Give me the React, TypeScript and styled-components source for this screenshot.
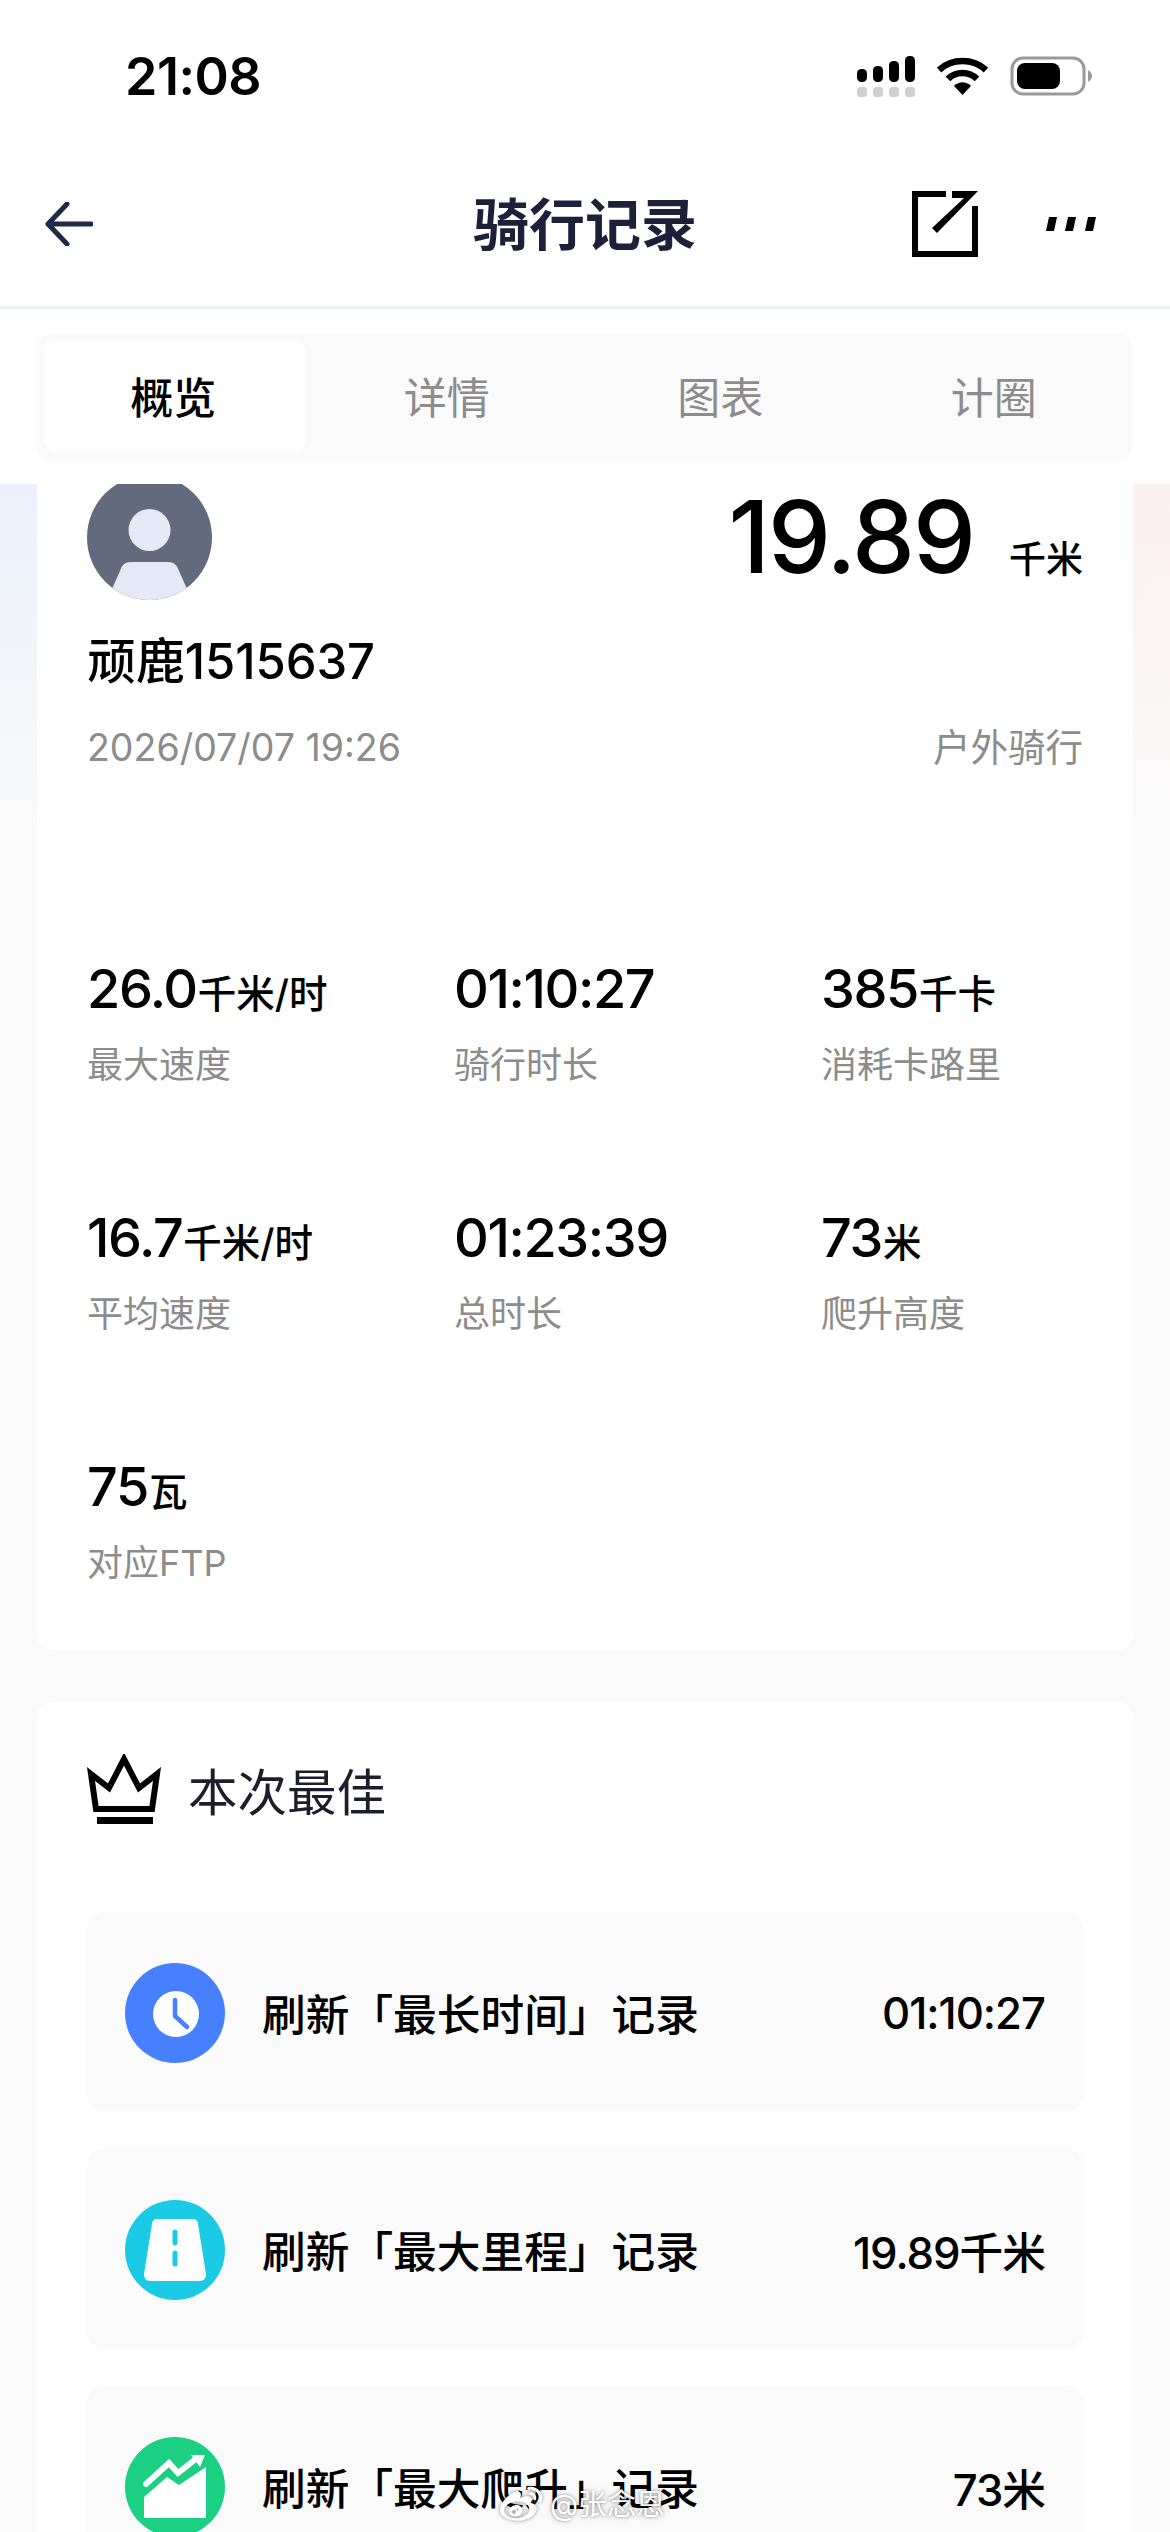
import React from 'react';
import styled, { createGlobalStyle } from 'styled-components';
import { FaWeibo } from 'react-icons/fa';

const GlobalStyle = createGlobalStyle`
  html, body {
    margin: 0;
    padding: 0;
    background: #fafafa;
  }
  * {
    box-sizing: border-box;
  }
`;

const FONT = `Inter, 'Noto Sans CJK SC', sans-serif`;

const Page = styled.div`
  width: 1170px;
  height: 2532px;
  position: relative;
  overflow: hidden;
  display: flex;
  flex-direction: column;
  font-family: ${FONT};
  color: #000;
`;

const Header = styled.header`
  height: 484px;
  flex-shrink: 0;
  background: #fff;
  position: relative;
  z-index: 2;
`;

const StatusBar = styled.div`
  height: 152px;
  padding: 0 78px 0 125px;
  display: flex;
  align-items: flex-start;
  justify-content: space-between;
`;

const Clock = styled.div`
  margin-top: 48px;
  font-size: 52px;
  line-height: 58px;
  font-weight: 600;
  letter-spacing: -0.5px;
`;

const StatusIcons = styled.div`
  margin-top: 56px;
  display: flex;
  align-items: flex-start;
  gap: 22px;
`;

const NavBar = styled.div`
  height: 157px;
  padding: 0 74px 10px 45px;
  border-bottom: 3px solid #eef0f8;
  display: flex;
  align-items: center;
  justify-content: space-between;
  position: relative;
`;

const NavTitle = styled.h1`
  position: absolute;
  left: 0;
  right: 0;
  top: 40px;
  margin: 0;
  text-align: center;
  font-size: 56px;
  line-height: 66px;
  font-weight: 700;
  color: #1c2038;
`;

const NavActions = styled.div`
  display: flex;
  align-items: center;
  gap: 68px;
`;

const TabBar = styled.div`
  margin: 25px 37px 0;
  height: 125px;
  padding: 6px 7px;
  border-radius: 14px;
  background: #fafafa;
  display: grid;
  grid-template-columns: repeat(4, 1fr);
  column-gap: 12px;
`;

const Tab = styled.div<{ $active?: boolean }>`
  padding: 0 3px 3px 0;
  border-radius: 14px;
  background: ${({ $active }) => ($active ? '#fff' : 'transparent')};
  color: ${({ $active }) => ($active ? '#000' : '#8c8c8c')};
  font-size: 43px;
  font-weight: ${({ $active }) => ($active ? 500 : 400)};
  display: flex;
  align-items: center;
  justify-content: center;
`;

const Scroller = styled.main`
  flex: 1;
  min-height: 0;
  overflow: hidden;
  padding: 0 37px;
  background:
    linear-gradient(to bottom, rgba(250, 250, 250, 0), #fafafa 340px),
    linear-gradient(to right, #ebf0fb, #fdf0f0);
`;

const ScrollContent = styled.div`
  margin-top: -59px;
  display: flex;
  flex-direction: column;
  gap: 52px;
`;

const Card = styled.section`
  background: #fff;
  border-radius: 16px;
  padding: 50px 50px 67px;
`;

const SummaryTop = styled.div`
  display: flex;
  align-items: flex-start;
  justify-content: space-between;
`;

const Distance = styled.div`
  margin-top: 12px;
  display: flex;
  align-items: baseline;
  gap: 35px;
`;

const DistanceValue = styled.span`
  font-size: 100px;
  line-height: 100px;
  font-weight: 500;
  letter-spacing: -2px;
`;

const DistanceUnit = styled.span`
  font-size: 37px;
  font-weight: 500;
`;

const UserName = styled.div`
  margin-top: 32px;
  font-size: 49px;
  line-height: 60px;
  font-weight: 500;
  letter-spacing: -0.1px;
`;

const MetaRow = styled.div`
  margin-top: 36px;
  display: flex;
  justify-content: space-between;
  font-size: 37.5px;
  line-height: 40px;
  color: #8c8c8c;
`;

const StatGrid = styled.div`
  margin-top: 190px;
  display: grid;
  grid-template-columns: repeat(3, 367px);
  row-gap: 122px;
`;

const Stat = styled.div`
  display: flex;
  flex-direction: column;
  gap: 27px;
`;

const StatValue = styled.div`
  padding-top: 1px;
  height: 60px;
  font-size: 54px;
  line-height: 60px;
  font-weight: 500;
  letter-spacing: -1.4px;
  white-space: nowrap;
`;

const StatUnit = styled.span`
  margin-left: 1px;
  font-size: 38.5px;
  line-height: 1;
  letter-spacing: 0;
`;

const StatLabel = styled.div`
  height: 40px;
  font-size: 36px;
  line-height: 40px;
  color: #8c8c8c;
`;

const BestHeader = styled.div`
  height: 74px;
  display: flex;
  align-items: center;
  gap: 27px;
  font-size: 49.5px;
  color: #1c1e2c;
`;

const RecordList = styled.div`
  margin-top: 86px;
  display: flex;
  flex-direction: column;
  gap: 38px;
`;

const RecordRow = styled.div`
  height: 199px;
  padding: 3px 38px 0;
  border-radius: 16px;
  background: #fafafa;
  display: flex;
  align-items: center;
  gap: 37px;
  font-size: 43.7px;
  font-weight: 500;
`;

const RecordIcon = styled.div<{ $color: string }>`
  width: 100px;
  height: 100px;
  flex-shrink: 0;
  border-radius: 50%;
  background: ${({ $color }) => $color};
  display: flex;
`;

const RecordTitle = styled.div`
  flex: 1;
  padding-bottom: 3px;
`;

const RecordValue = styled.div`
  font-size: 43.7px;
  letter-spacing: -1px;
  white-space: nowrap;
`;

const Watermark = styled.div`
  position: absolute;
  left: 500px;
  top: 2484px;
  z-index: 3;
  display: flex;
  align-items: center;
  gap: 8px;
  color: #fff;
  font-size: 29px;
  line-height: 36px;
  text-shadow: 0 0 3px rgba(0, 0, 0, 0.4), 0 0 6px rgba(0, 0, 0, 0.25);
  svg {
    filter: drop-shadow(0 0 2px rgba(0, 0, 0, 0.45));
  }
`;

const SignalIcon = () => (
  <svg width="58" height="42" viewBox="0 0 58 42">
    <rect x="0" y="13" width="10" height="13" rx="4.5" fill="#000" />
    <rect x="16" y="10" width="10" height="16" rx="4.5" fill="#000" />
    <rect x="32" y="5" width="10" height="21" rx="4.5" fill="#000" />
    <rect x="48" y="0" width="10" height="26" rx="4.5" fill="#000" />
    {[0, 16, 32, 48].map((x) => (
      <rect key={x} x={x} y="31" width="10" height="10" rx="3.5" fill="#cfcfcf" />
    ))}
  </svg>
);

const WifiIcon = () => (
  <svg width="51" height="40" viewBox="0 0 51 40">
    <path d="M2 14 C15 2 36 2 49 14" fill="none" stroke="#000" strokeWidth="6.5" />
    <path d="M11 23 C19 15 32 15 40 23" fill="none" stroke="#000" strokeWidth="6.5" />
    <path d="M17 30 C22 25 29 25 34 30 L25.5 39 Z" fill="#000" />
  </svg>
);

const BatteryIcon = () => (
  <svg width="82" height="40" viewBox="0 0 82 40">
    <rect x="2" y="2" width="72" height="36" rx="11" fill="none" stroke="#9a9a9a" strokeWidth="3" />
    <rect x="7" y="7" width="43" height="26" rx="8" fill="#000" />
    <path d="M78 14 C81 16 82 18 82 20 C82 22 81 24 78 26 Z" fill="#9a9a9a" />
  </svg>
);

const BackIcon = () => (
  <svg width="48" height="44" viewBox="0 0 48 44">
    <path
      d="M22 2 L3 22 L22 42 M3 22 L46 22"
      fill="none"
      stroke="#1e2a4a"
      strokeWidth="5"
      strokeLinecap="round"
      strokeLinejoin="round"
    />
  </svg>
);

const ShareIcon = () => (
  <svg width="66" height="66" viewBox="0 0 66 66">
    <path d="M34 3 L3 3 L3 63 L63 63 L63 15" fill="none" stroke="#000" strokeWidth="6" />
    <path d="M40 0 L66 0 L25 42 L20 37 L52 7 L40 7 Z" fill="#000" />
  </svg>
);

const MoreIcon = () => (
  <svg width="50" height="14" viewBox="0 0 50 14">
    <path d="M3 0 L11 0 L8 14 L0 14 Z" fill="#000" />
    <path d="M22 0 L30 0 L27 14 L19 14 Z" fill="#000" />
    <path d="M42 0 L50 0 L47 14 L39 14 Z" fill="#000" />
  </svg>
);

const AvatarIcon = () => (
  <svg width="125" height="125" viewBox="0 0 125 125">
    <defs>
      <clipPath id="avatar-clip">
        <circle cx="62.5" cy="62.5" r="62.5" />
      </clipPath>
    </defs>
    <circle cx="62.5" cy="62.5" r="62.5" fill="#646a7e" />
    <circle cx="62.5" cy="55" r="21" fill="#e5e9f5" />
    <path
      d="M20 125 L33 96 C35 90 38 87 44 87 L81 87 C87 87 90 90 92 96 L105 125 Z"
      fill="#e5e9f5"
      clipPath="url(#avatar-clip)"
    />
  </svg>
);

const CrownIcon = () => (
  <svg width="74" height="70" viewBox="0 0 74 70">
    <path
      d="M4 20 L22 34 L37 5 L52 34 L70 20 L65 55 L9 55 Z"
      fill="none"
      stroke="#000"
      strokeWidth="6"
    />
    <rect x="10" y="63" width="56" height="7" fill="#000" />
  </svg>
);

const ClockGlyph = () => (
  <svg width="100" height="100" viewBox="0 0 100 100">
    <circle cx="51" cy="51" r="23" fill="#fff" />
    <path
      d="M50 37 L50 53 L62 64"
      fill="none"
      stroke="#4680ff"
      strokeWidth="4.5"
      strokeLinecap="round"
      strokeLinejoin="round"
    />
  </svg>
);

const RoadGlyph = () => (
  <svg width="100" height="100" viewBox="0 0 100 100">
    <path
      d="M32 19 L68 19 C71 19 73 21 73 24 L81 74 C81 78 79 81 75 81 L25 81 C21 81 19 78 19 74 L27 24 C27 21 29 19 32 19 Z"
      fill="#fff"
    />
    <path
      d="M50 32 L50 43 M50 53 L50 64"
      fill="none"
      stroke="#1bcbe5"
      strokeWidth="5"
      strokeLinecap="round"
    />
  </svg>
);

const ClimbGlyph = () => (
  <svg width="100" height="100" viewBox="0 0 100 100">
    <path d="M19 60 L42 40 L54 48 L81 30 L81 81 L19 81 Z" fill="#fff" />
    <path
      d="M21 47 L44 26 L53 36 L72 21"
      fill="none"
      stroke="#fff"
      strokeWidth="6"
      strokeLinecap="round"
    />
    <path d="M66 18 L80 18 L75 30 Z" fill="#fff" />
  </svg>
);

const tabs = ['概览', '详情', '图表', '计圈'];

const stats = [
  { value: '26.0', unit: '千米/时', label: '最大速度' },
  { value: '01:10:27', unit: '', label: '骑行时长' },
  { value: '385', unit: '千卡', label: '消耗卡路里' },
  { value: '16.7', unit: '千米/时', label: '平均速度' },
  { value: '01:23:39', unit: '', label: '总时长' },
  { value: '73', unit: '米', label: '爬升高度' },
  { value: '75', unit: '瓦', label: '对应FTP' },
];

const records = [
  { color: '#4680ff', icon: <ClockGlyph />, title: '刷新「最长时间」记录', value: '01:10:27' },
  { color: '#1bcbe5', icon: <RoadGlyph />, title: '刷新「最大里程」记录', value: '19.89千米' },
  { color: '#1bcf83', icon: <ClimbGlyph />, title: '刷新「最大爬升」记录', value: '73米' },
];

const App: React.FC = () => {
  return (
    <Page>
      <GlobalStyle />
      <Header>
        <StatusBar>
          <Clock>21:08</Clock>
          <StatusIcons>
            <SignalIcon />
            <WifiIcon />
            <BatteryIcon />
          </StatusIcons>
        </StatusBar>
        <NavBar>
          <BackIcon />
          <NavTitle>骑行记录</NavTitle>
          <NavActions>
            <ShareIcon />
            <MoreIcon />
          </NavActions>
        </NavBar>
        <TabBar>
          {tabs.map((tab, i) => (
            <Tab key={tab} $active={i === 0}>
              {tab}
            </Tab>
          ))}
        </TabBar>
      </Header>

      <Scroller>
        <ScrollContent>
          <Card>
            <SummaryTop>
              <AvatarIcon />
              <Distance>
                <DistanceValue>19.89</DistanceValue>
                <DistanceUnit>千米</DistanceUnit>
              </Distance>
            </SummaryTop>
            <UserName>顽鹿1515637</UserName>
            <MetaRow>
              <span>2026/07/07 19:26</span>
              <span>户外骑行</span>
            </MetaRow>
            <StatGrid>
              {stats.map((stat) => (
                <Stat key={stat.label}>
                  <StatValue>
                    {stat.value}
                    {stat.unit && <StatUnit>{stat.unit}</StatUnit>}
                  </StatValue>
                  <StatLabel>{stat.label}</StatLabel>
                </Stat>
              ))}
            </StatGrid>
          </Card>

          <Card>
            <BestHeader>
              <CrownIcon />
              本次最佳
            </BestHeader>
            <RecordList>
              {records.map((record) => (
                <RecordRow key={record.title}>
                  <RecordIcon $color={record.color}>{record.icon}</RecordIcon>
                  <RecordTitle>{record.title}</RecordTitle>
                  <RecordValue>{record.value}</RecordValue>
                </RecordRow>
              ))}
            </RecordList>
          </Card>
        </ScrollContent>
      </Scroller>

      <Watermark>
        <FaWeibo size={42} />
        <span>@张念恩</span>
      </Watermark>
    </Page>
  );
};

export default App;
